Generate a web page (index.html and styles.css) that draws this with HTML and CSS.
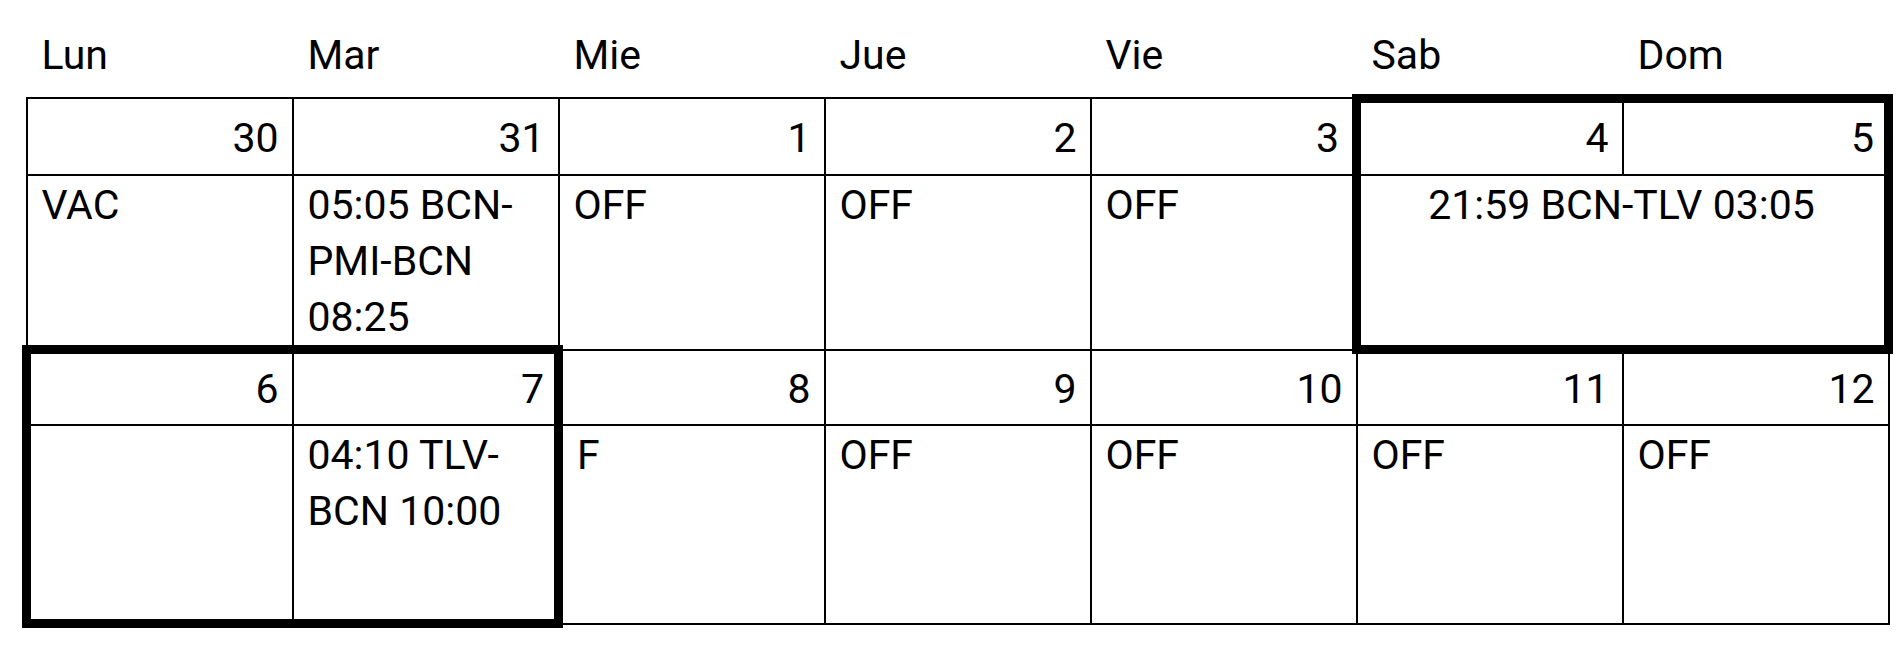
FILE: index.html
```html
<!DOCTYPE html>
<html lang="es">
<head>
<meta charset="utf-8">
<title>Calendario</title>
<link rel="stylesheet" href="styles.css">
</head>
<body>
<table class="cal">
  <colgroup>
    <col class="c"><col class="c"><col class="c"><col class="c"><col class="c"><col class="c"><col class="c">
  </colgroup>
  <thead>
    <tr class="head">
      <th>Lun</th><th>Mar</th><th>Mie</th><th>Jue</th><th>Vie</th><th>Sab</th><th>Dom</th>
    </tr>
  </thead>
  <tbody>
    <tr class="date date-1">
      <td>30</td><td>31</td><td>1</td><td>2</td><td>3</td>
      <td class="bt bl">4</td><td class="bt br">5</td>
    </tr>
    <tr class="duty duty-1">
      <td>VAC</td>
      <td>05:05 BCN-PMI-BCN 08:25</td>
      <td>OFF</td><td>OFF</td><td>OFF</td>
      <td colspan="2" class="center bl br bb">21:59 BCN-TLV 03:05</td>
    </tr>
    <tr class="date date-2">
      <td class="bt bl">6</td><td class="bt br">7</td>
      <td>8</td><td>9</td><td>10</td><td>11</td><td>12</td>
    </tr>
    <tr class="duty duty-2">
      <td class="bl bb"></td>
      <td class="br bb">04:10 TLV-BCN 10:00</td>
      <td>F</td><td>OFF</td><td>OFF</td><td>OFF</td><td>OFF</td>
    </tr>
  </tbody>
</table>
</body>
</html>
```

FILE: styles.css
```css
html, body {
  margin: 0;
  padding: 0;
  background: #ffffff;
}

body {
  font-family: Roboto, "Liberation Sans", sans-serif;
  font-size: 41px;
  line-height: 56px;
  color: #000000;
}

.cal {
  border-collapse: collapse;
  table-layout: fixed;
  width: 1864px;
  margin-left: 22px;
}

.cal .c {
  width: 266px;
}

.head {
  height: 98px;
}

.head th {
  font-weight: 400;
  text-align: left;
  vertical-align: top;
  padding: 27px 0 0 15px;
  border: none;
}

.cal td {
  border: 2px solid #000000;
  padding: 0 13px 0 14px;
  vertical-align: top;
  word-wrap: break-word;
}

.date {
  height: 77px;
}

.date-2 {
  height: 75px;
}

.date td {
  text-align: right;
  vertical-align: baseline;
  padding-top: 7px;
  padding-bottom: 0;
}

.duty-1 {
  height: 170px;
}

.duty-2 {
  height: 199px;
}

.duty td {
  padding-top: 1px;
}

.cal td.center {
  text-align: center;
}

/* thick outline around grouped days */
.cal td.bt { border-top: 9px solid #000000; }
.cal td.bb { border-bottom: 9px solid #000000; }
.cal td.bl { border-left: 9px solid #000000; }
.cal td.br { border-right: 9px solid #000000; }

.date td.br { padding-right: 10px; }
.duty td.bl { padding-left: 11px; }
```
